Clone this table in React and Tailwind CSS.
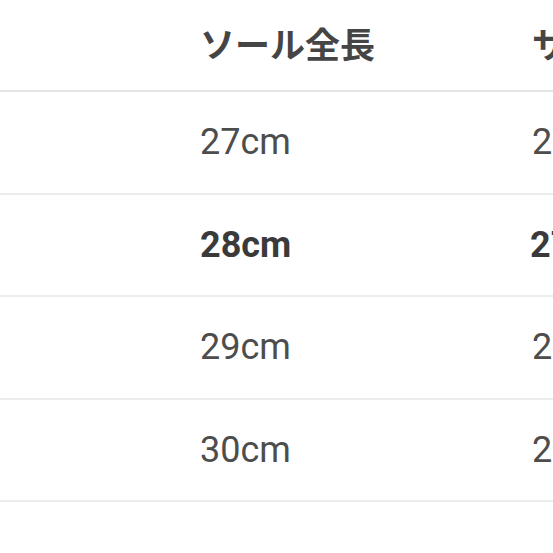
const rows = [
  { sole: "27cm", size: "26.5cm", bold: false },
  { sole: "28cm", size: "27.5cm", bold: true },
  { sole: "29cm", size: "28.5cm", bold: false },
  { sole: "30cm", size: "29.5cm", bold: false },
];

export default function App() {
  return (
    <div
      className="w-[553px] h-[553px] overflow-hidden bg-white text-[#4a4a4a]"
      style={{ fontFamily: 'Roboto, "Noto Sans CJK JP", sans-serif' }}
    >
      <div className="w-[800px]">
        <div className="grid grid-cols-[200px_332px_268px] h-[92px] items-center border-b-2 border-[#e4e4e4]">
          <div></div>
          <div className="text-[35px] font-bold text-[#454545] pt-1">ソール全長</div>
          <div className="text-[35px] font-bold text-[#454545] pt-1">サイズ</div>
        </div>
        {rows.map((r) => (
          <div
            key={r.sole}
            className={`grid grid-cols-[200px_332px_268px] h-[102.5px] items-center border-b-2 border-[#ececec] text-[36px] ${r.bold ? "font-bold text-[#3a3a3a]" : "text-[#4d4d4d]"}`}
          >
            <div></div>
            <div>{r.sole}</div>
            <div className={r.bold ? "-ml-[2px]" : ""}>{r.size}</div>
          </div>
        ))}
      </div>
    </div>
  );
}
